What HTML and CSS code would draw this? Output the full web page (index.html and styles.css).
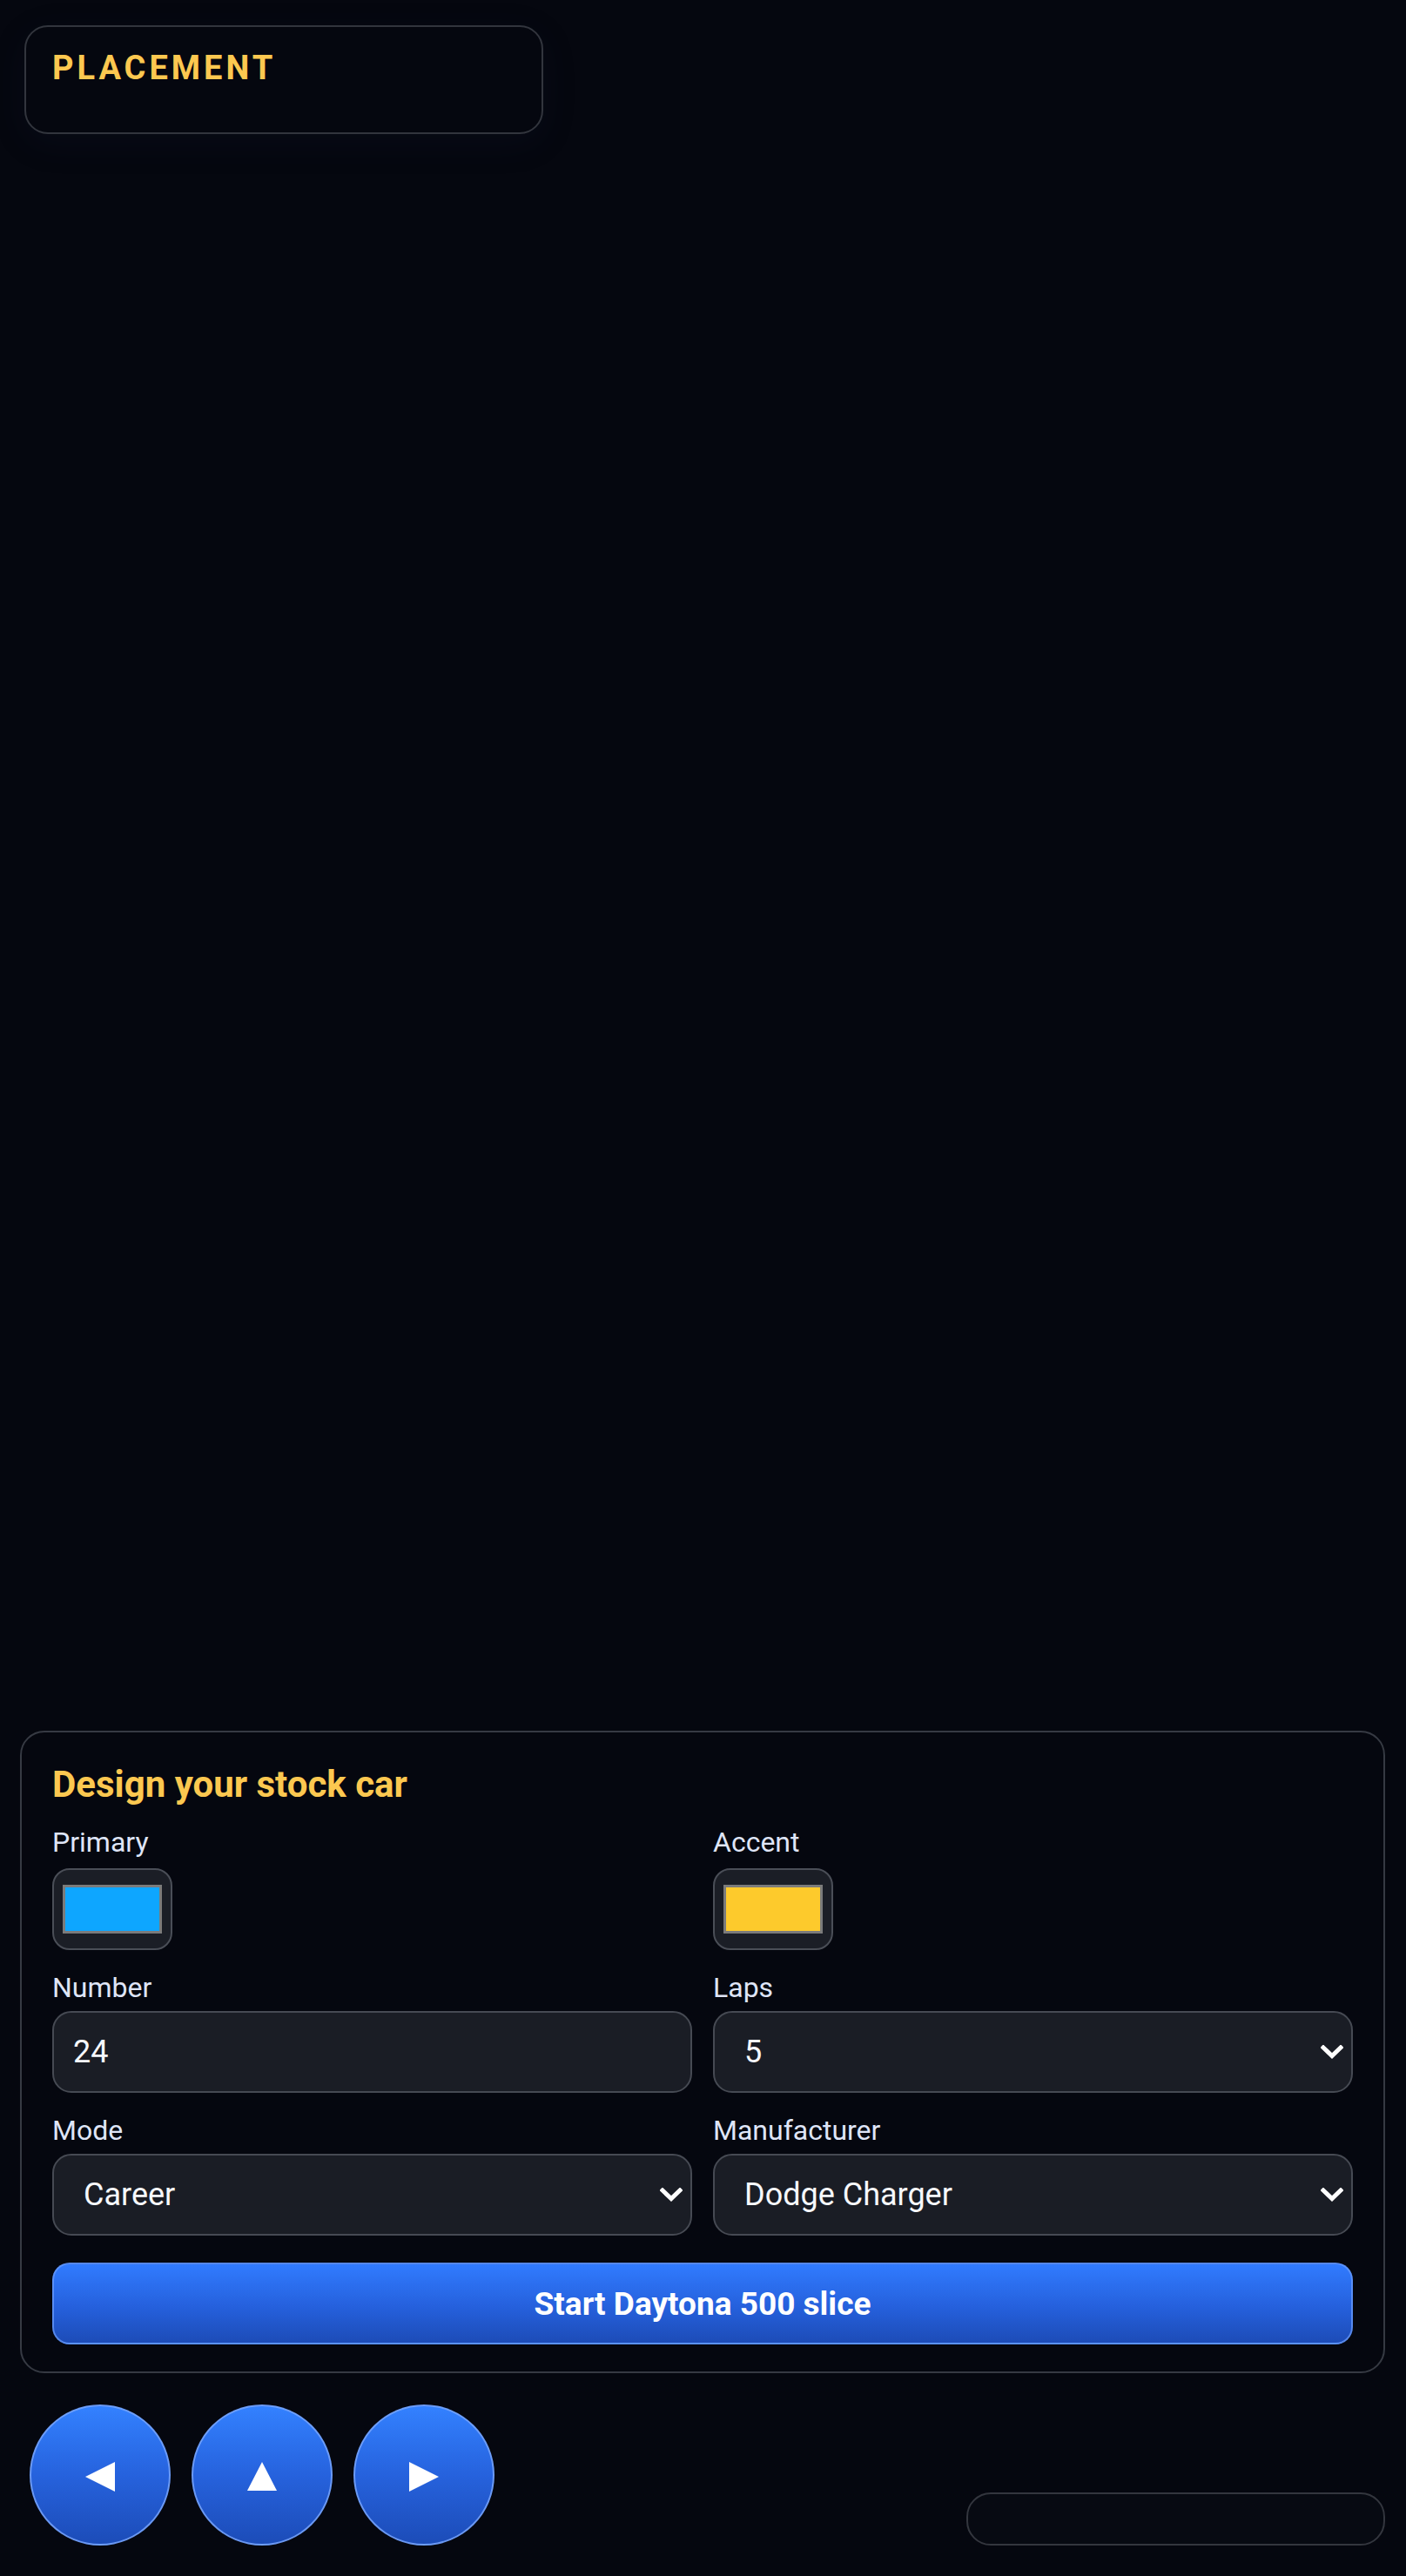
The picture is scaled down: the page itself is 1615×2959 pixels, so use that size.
FILE: index.html
```html
<!DOCTYPE html>
<html lang="en">
<head>
<meta charset="utf-8">
<title>Daytona 500 slice</title>
<link rel="stylesheet" href="styles.css">
</head>
<body>
<div class="screen">
  <header class="hud-top">
    <div class="placement">
      <div class="placement-title">PLACEMENT</div>
    </div>
  </header>
  <div class="spacer"></div>
  <section class="panel">
    <h2 class="panel-title">Design your stock car</h2>
    <div class="grid">
      <div class="field">
        <label class="field-label">Primary</label>
        <div class="swatch"><span class="swatch-fill fill-primary"></span></div>
      </div>
      <div class="field">
        <label class="field-label">Accent</label>
        <div class="swatch"><span class="swatch-fill fill-accent"></span></div>
      </div>
      <div class="field">
        <label class="field-label" for="num">Number</label>
        <input class="control input" id="num" type="text" value="24">
      </div>
      <div class="field">
        <label class="field-label" for="laps">Laps</label>
        <div class="select-wrap">
          <select class="control select" id="laps"><option>5</option></select>
          <svg class="chev" viewBox="0 0 26 16" width="26" height="16"><polyline points="3,3 13,12.5 23,3" fill="none" stroke="#fff" stroke-width="5" stroke-linecap="square"/></svg>
        </div>
      </div>
      <div class="field">
        <label class="field-label" for="mode">Mode</label>
        <div class="select-wrap">
          <select class="control select" id="mode"><option>Career</option></select>
          <svg class="chev" viewBox="0 0 26 16" width="26" height="16"><polyline points="3,3 13,12.5 23,3" fill="none" stroke="#fff" stroke-width="5" stroke-linecap="square"/></svg>
        </div>
      </div>
      <div class="field">
        <label class="field-label" for="mfr">Manufacturer</label>
        <div class="select-wrap">
          <select class="control select" id="mfr"><option>Dodge Charger</option></select>
          <svg class="chev" viewBox="0 0 26 16" width="26" height="16"><polyline points="3,3 13,12.5 23,3" fill="none" stroke="#fff" stroke-width="5" stroke-linecap="square"/></svg>
        </div>
      </div>
    </div>
    <button class="start" type="button">Start Daytona 500 slice</button>
  </section>
  <footer class="controls">
    <div class="pad">
      <button class="round" type="button" aria-label="Left"><svg viewBox="0 0 36 36" width="36" height="36"><polygon points="1,18 35,1 35,35" fill="#fff"/></svg></button>
      <button class="round" type="button" aria-label="Accelerate"><svg viewBox="0 0 36 36" width="36" height="36"><polygon points="18,1 35,34 1,34" fill="#fff"/></svg></button>
      <button class="round" type="button" aria-label="Right"><svg viewBox="0 0 36 36" width="36" height="36"><polygon points="35,18 1,1 1,35" fill="#fff"/></svg></button>
    </div>
    <div class="status"></div>
  </footer>
</div>
</body>
</html>
```
FILE: styles.css
```css
* { box-sizing: border-box; }

html, body {
  margin: 0;
  padding: 0;
  background: #05070f;
}

body {
  font-family: Roboto, "Liberation Sans", Arial, sans-serif;
  color: #e0e6f7;
}

.screen {
  min-height: 100vh;
  display: flex;
  flex-direction: column;
  padding: 29px 24px 35px 23px;
}

.hud-top {
  display: flex;
}

.placement {
  margin-left: 5px;
  width: 596px;
  height: 125px;
  border: 2px solid #32353d;
  border-radius: 27px;
  background: #05070f;
  padding: 25px 30px 0;
  box-shadow: 0 10px 40px rgba(30, 40, 70, 0.12);
}

.placement-title {
  font-size: 38px;
  line-height: 44px;
  font-weight: 700;
  letter-spacing: 4px;
  color: #fcc850;
}

.spacer { flex: 1; }

.panel {
  border: 2px solid #363a43;
  border-radius: 28px;
  padding: 35px 35px 31px;
  background: #05070f;
}

.panel-title {
  margin: 0 0 23px;
  font-size: 42px;
  line-height: 49px;
  font-weight: 700;
  color: #fcc850;
}

.grid {
  display: grid;
  grid-template-columns: 1fr 1fr;
  column-gap: 24px;
  row-gap: 24px;
}

.field {
  display: flex;
  flex-direction: column;
  gap: 8px;
  align-items: flex-start;
}

.field-label {
  font-size: 32px;
  line-height: 38px;
  color: #dfe5f7;
}

.swatch {
  width: 138px;
  height: 94px;
  margin-top: 3px;
  border: 2px solid #4a4e57;
  border-radius: 20px;
  background: #1b1e26;
  padding: 17px 10px;
  display: flex;
}

.swatch-fill {
  flex: 1;
  border: 3px solid #7b7b7b;
}

.fill-primary { background: #0ea6ff; }
.fill-accent { background: #fdca2c; }

.control {
  width: 100%;
  height: 94px;
  border: 2px solid #464a53;
  border-radius: 22px;
  background: #1a1d25;
  color: #f6f8fc;
  font-family: Roboto, "Liberation Sans", Arial, sans-serif;
  font-size: 36px;
  outline: none;
}

.input {
  padding: 0 22px;
}

.select-wrap {
  position: relative;
  width: 100%;
}

.select {
  appearance: none;
  -webkit-appearance: none;
  padding: 0 60px 0 34px;
  display: block;
}

.chev {
  position: absolute;
  right: 11px;
  top: 39px;
  pointer-events: none;
}

.start {
  display: block;
  width: 100%;
  height: 94px;
  margin-top: 31px;
  border: 2px solid rgba(105, 155, 250, 0.75);
  border-radius: 20px;
  background: linear-gradient(180deg, #317bff 0%, #2560dc 55%, #1d4cb7 100%);
  color: #ffffff;
  font-family: Roboto, "Liberation Sans", Arial, sans-serif;
  font-size: 37px;
  font-weight: 700;
}

.controls {
  margin-top: 36px;
  display: flex;
  justify-content: space-between;
  align-items: flex-end;
}

.pad {
  display: flex;
  gap: 24px;
  margin-left: 11px;
}

.round {
  width: 162px;
  height: 162px;
  border-radius: 50%;
  border: 2px solid rgba(120, 165, 250, 0.85);
  background: linear-gradient(180deg, #3381ff 0%, #2662dd 50%, #1c4cb8 100%);
  display: flex;
  align-items: center;
  justify-content: center;
  padding: 0;
}

.round svg {
  margin-top: 3px;
}

.status {
  width: 481px;
  height: 61px;
  border: 2px solid #33363e;
  border-radius: 28px;
  background: #070a12;
}
```
